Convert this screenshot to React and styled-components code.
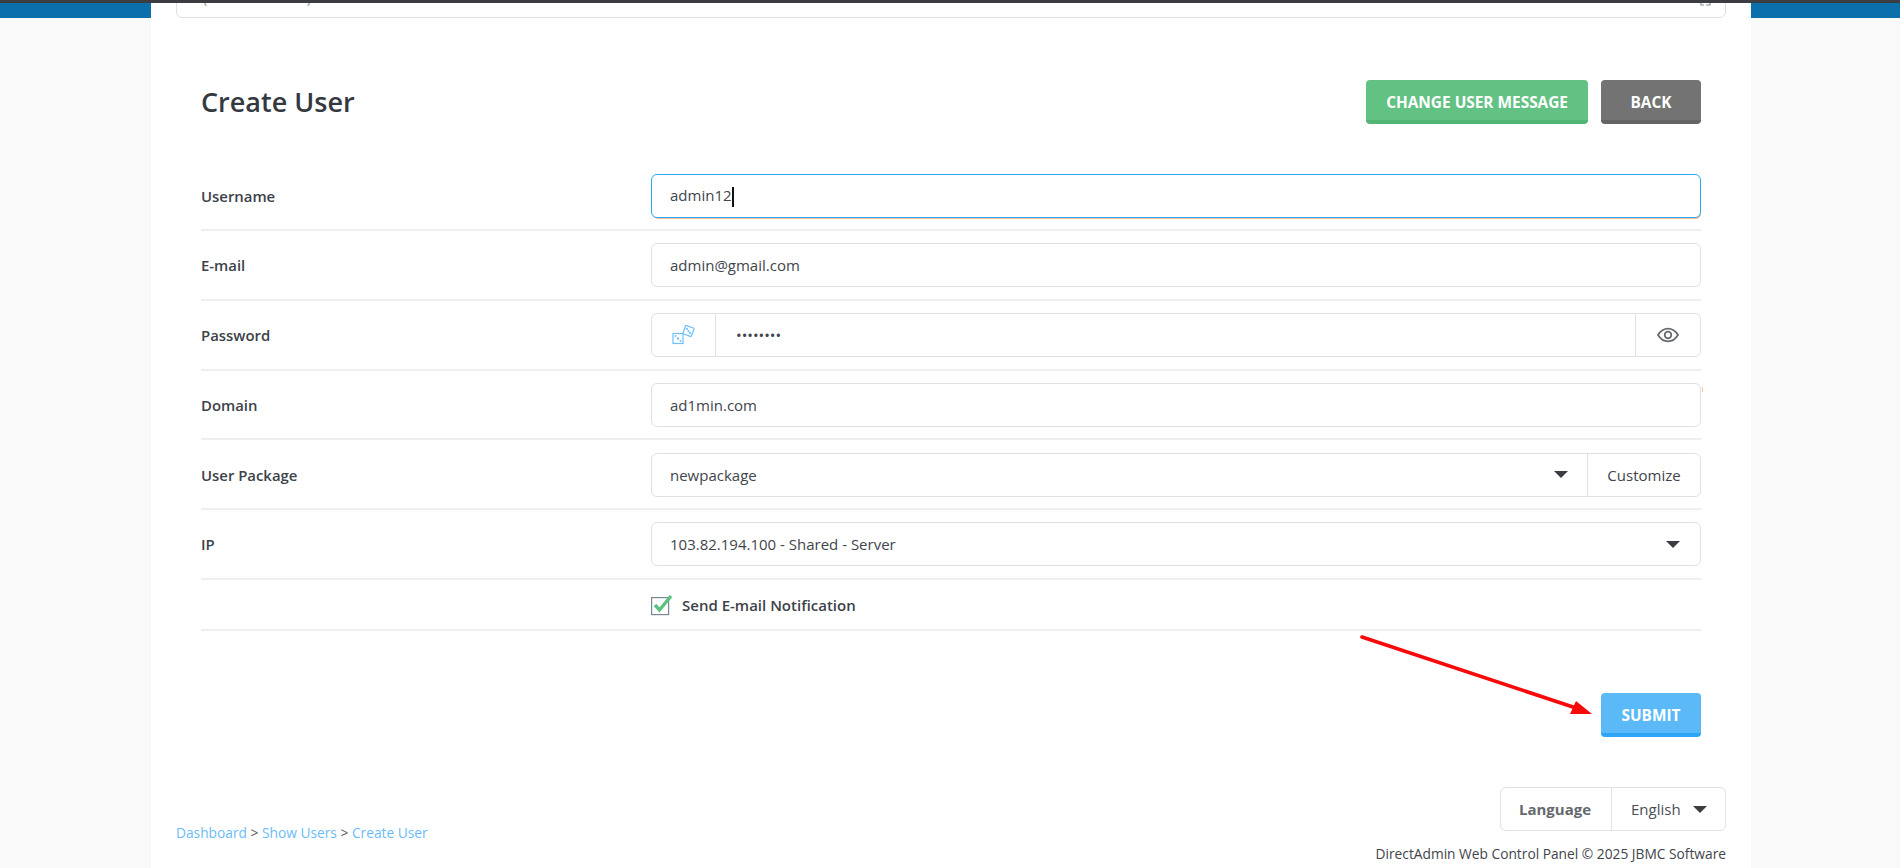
import React from 'react';
import styled, { createGlobalStyle } from 'styled-components';

const GlobalStyle = createGlobalStyle`
  html, body {
    margin: 0;
    padding: 0;
    height: 100%;
    overflow: hidden;
  }
  body {
    font-family: "Open Sans", "Liberation Sans", sans-serif;
    font-size: 15px;
    color: #33393f;
  }
`;

const border = '#dfe0e2';

const Page = styled.div`
  position: relative;
  height: 868px;
  overflow: hidden;
  background-color: #f9f9fa;
  background-image: linear-gradient(#0a6fab 18px, transparent 18px);
`;

const TopLine = styled.div`
  position: absolute;
  top: 0;
  left: 0;
  right: 0;
  height: 3px;
  background: #3b3d40;
  z-index: 2;
`;

const Panel = styled.main`
  width: 1600px;
  height: 868px;
  margin-left: 151px;
  padding: 0 25px;
  box-sizing: border-box;
  background: #fff;
  overflow: hidden;
`;

const SearchCard = styled.div`
  display: flex;
  justify-content: space-between;
  align-items: flex-end;
  height: 40px;
  margin-top: -22px;
  padding: 0 14px 10px 26px;
  box-sizing: border-box;
  border: 1px solid ${border};
  border-radius: 6px;
  color: #8a8f94;
  font-size: 14px;
  line-height: 18px;
`;

const Parens = styled.div`
  display: flex;
  justify-content: space-between;
  width: 108px;
`;

const Content = styled.div`
  padding: 0 25px;
`;

const HeaderRow = styled.header`
  display: flex;
  align-items: center;
  justify-content: space-between;
  margin-top: 62px;
  margin-bottom: 50px;
`;

const Title = styled.h1`
  margin: 0 0 1px;
  font-size: 27px;
  font-weight: 600;
  line-height: 43px;
  color: #33393f;
`;

const Actions = styled.div`
  display: flex;
  gap: 13px;
`;

const ActionButton = styled.button`
  height: 44px;
  min-width: 100px;
  padding: 4px 20px 0;
  box-sizing: border-box;
  border: 0;
  border-bottom: 4px solid ${(p) => p.$shade};
  border-radius: 4px;
  background: ${(p) => p.$color};
  color: #fff;
  font-family: inherit;
  font-size: 15.4px;
  font-weight: 700;
  text-transform: uppercase;
`;

const Row = styled.div`
  display: grid;
  grid-template-columns: 450px 1fr;
  align-items: center;
  height: ${(p) => p.$height || 69.75}px;
  box-sizing: border-box;
  padding-top: ${(p) => (p.$bottom ? 0 : 1)}px;
  padding-bottom: ${(p) => p.$bottom || 0}px;
  border-bottom: 2px solid #eeeff0;
`;

const Label = styled.label`
  font-size: 14.9px;
  font-weight: 600;
  color: #3c4248;
`;

const Field = styled.div`
  position: relative;
  display: flex;
  align-items: center;
  height: 44px;
  box-sizing: border-box;
  border: 1px solid ${(p) => (p.$focused ? '#2aaaf2' : border)};
  border-radius: 6px;
  background: #fff;
  color: #3f454b;
  box-shadow: ${(p) => (p.$focused ? '1px 2px 0 -1px #f5bb93' : 'none')};
`;

const ResizeTick = styled.span`
  position: absolute;
  top: 3px;
  right: -3px;
  width: 1px;
  height: 5px;
  background: #f8c9a4;
`;

const Value = styled.span`
  flex: 1;
  padding-left: 18px;
`;

const TextCaret = styled.span`
  display: inline-block;
  width: 2px;
  height: 20px;
  vertical-align: middle;
  background: #111;
`;

const Addon = styled.div`
  display: flex;
  align-items: center;
  justify-content: center;
  align-self: stretch;
  width: ${(p) => p.$width}px;
  box-sizing: border-box;
  flex: none;
  border-left: ${(p) => (p.$left ? `1px solid ${border}` : 'none')};
  border-right: ${(p) => (p.$right ? `1px solid ${border}` : 'none')};
`;

const Dots = styled.span`
  flex: 1;
  padding-left: 20px;
`;

const SelectCaret = styled.span`
  width: 0;
  height: 0;
  flex: none;
  margin-right: ${(p) => p.$right || 0}px;
  margin-left: ${(p) => p.$left || 0}px;
  border-left: 7px solid transparent;
  border-right: 7px solid transparent;
  border-top: 7px solid #3b3d42;
`;

const CheckWrap = styled.div`
  display: flex;
  align-items: center;
  gap: 7px;
  font-size: 15px;
  font-weight: 600;
  color: #3c4248;
`;

const SubmitRow = styled.div`
  display: flex;
  justify-content: flex-end;
  margin-top: 62px;
`;

const Footer = styled.footer`
  display: flex;
  justify-content: space-between;
  align-items: flex-end;
  margin: 50px -25px 0;
`;

const Crumbs = styled.nav`
  padding-bottom: 21px;
  font-size: 13.75px;
  color: #555;
  a {
    color: #6bbcf8;
    text-decoration: none;
  }
`;

const FooterRight = styled.div`
  display: flex;
  flex-direction: column;
  align-items: flex-end;
  gap: 13px;
`;

const LanguageBox = styled.div`
  display: flex;
  align-items: center;
  height: 44px;
  width: 226px;
  box-sizing: border-box;
  border: 1px solid #e0e2e6;
  border-radius: 6px;
`;

const LanguageLabel = styled.div`
  display: flex;
  align-items: center;
  justify-content: center;
  align-self: stretch;
  width: 111px;
  padding-right: 2px;
  box-sizing: border-box;
  flex: none;
  border-right: 1px solid #e0e2e6;
  color: #66696e;
  font-weight: 700;
`;

const LanguageValue = styled.div`
  display: flex;
  align-items: center;
  padding-left: 19px;
  color: #4a4f55;
`;

const Copy = styled.div`
  font-size: 13.75px;
  color: #3f454b;
`;

const Arrow = styled.svg`
  position: absolute;
  left: 1350px;
  top: 630px;
  z-index: 1;
`;

const DiceIcon = () => (
  <svg width="24" height="20" viewBox="0 0 24 20" fill="none" stroke="#6cc0fb" strokeWidth="1.2">
    <rect x="1" y="8.500" width="10" height="10" />
    <rect x="12" y="1.5" width="9" height="9" rx="1" transform="rotate(20 16.5 6)" />
    <circle cx="6" cy="13.500" r=".6" />
    <circle cx="3.500" cy="11" r=".4" />
    <circle cx="8.500" cy="16" r=".4" />
    <circle cx="15" cy="4" r=".5" />
    <circle cx="16.500" cy="6" r=".5" />
    <circle cx="18" cy="8" r=".5" />
  </svg>
);

const EyeIcon = () => (
  <svg width="22" height="16" viewBox="0 0 22 16" fill="none" stroke="#66696e" strokeWidth="1.8">
    <path d="M1 8c2.6-4.2 6-6.3 10-6.3S18.4 3.800 21 8c-2.600 4.200-6 6.300-10 6.300S3.600 12.200 1 8z" />
    <circle cx="11" cy="8" r="3.3" />
  </svg>
);

const CheckIcon = () => (
  <svg width="24" height="22" viewBox="0 0 24 22" fill="none">
    <rect x=".6" y="3.600" width="17" height="17" fill="#fff" stroke="#7b8794" strokeWidth="1.200" />
    <path d="M4 11l4.500 5L20 2" stroke="#5cc27f" strokeWidth="3.400" />
  </svg>
);

const SearchIcon = () => (
  <svg width="11" height="12" viewBox="0 0 11 12" fill="none" stroke="#8a8f94" strokeWidth="1.2">
    <path d="M1 6v4h3M6 10h4V6" />
  </svg>
);

const App = () => {
  return (
    <Page>
      <GlobalStyle />
      <TopLine />
      <Panel>
        <SearchCard>
          <Parens><span>(</span><span>)</span></Parens>
          <SearchIcon />
        </SearchCard>
        <Content>
          <HeaderRow>
            <Title>Create User</Title>
            <Actions>
              <ActionButton $color="#62c283" $shade="#52b574">Change User Message</ActionButton>
              <ActionButton $color="#727372" $shade="#646564">Back</ActionButton>
            </Actions>
          </HeaderRow>

          <Row $height={57} $bottom={11}>
            <Label>Username</Label>
            <Field $focused>
              <Value>admin12<TextCaret /></Value>
            </Field>
          </Row>
          <Row>
            <Label>E-mail</Label>
            <Field><Value>admin@gmail.com</Value></Field>
          </Row>
          <Row>
            <Label>Password</Label>
            <Field>
              <Addon $width={64} $right><DiceIcon /></Addon>
              <Dots>••••••••</Dots>
              <Addon $width={65} $left><EyeIcon /></Addon>
            </Field>
          </Row>
          <Row>
            <Label>Domain</Label>
            <Field><Value>ad1min.com</Value><ResizeTick /></Field>
          </Row>
          <Row>
            <Label>User Package</Label>
            <Field>
              <Value>newpackage</Value>
              <SelectCaret $right={19} />
              <Addon $width={113} $left>Customize</Addon>
            </Field>
          </Row>
          <Row>
            <Label>IP</Label>
            <Field>
              <Value>103.82.194.100 - Shared - Server</Value>
              <SelectCaret $right={20} />
            </Field>
          </Row>
          <Row $height={51.25}>
            <span />
            <CheckWrap><CheckIcon />Send E-mail Notification</CheckWrap>
          </Row>

          <SubmitRow>
            <ActionButton $color="#5cb9f8" $shade="#2ea6f5">Submit</ActionButton>
          </SubmitRow>

          <Footer>
            <Crumbs>
              <a href="#d">Dashboard</a> &gt; <a href="#u">Show Users</a> &gt; <a href="#c">Create User</a>
            </Crumbs>
            <FooterRight>
              <LanguageBox>
                <LanguageLabel>Language</LanguageLabel>
                <LanguageValue>English<SelectCaret $left={12} /></LanguageValue>
              </LanguageBox>
              <Copy>DirectAdmin Web Control Panel © 2025 JBMC Software</Copy>
            </FooterRight>
          </Footer>
        </Content>
      </Panel>
      <Arrow width="260" height="100" viewBox="0 0 260 100">
        <path d="M12 7L226 78" stroke="#f80a0a" strokeWidth="3.6" strokeLinecap="round" />
        <path d="M242 84L220 84L226 71z" fill="#f80a0a" />
      </Arrow>
    </Page>
  );
};

export default App;
